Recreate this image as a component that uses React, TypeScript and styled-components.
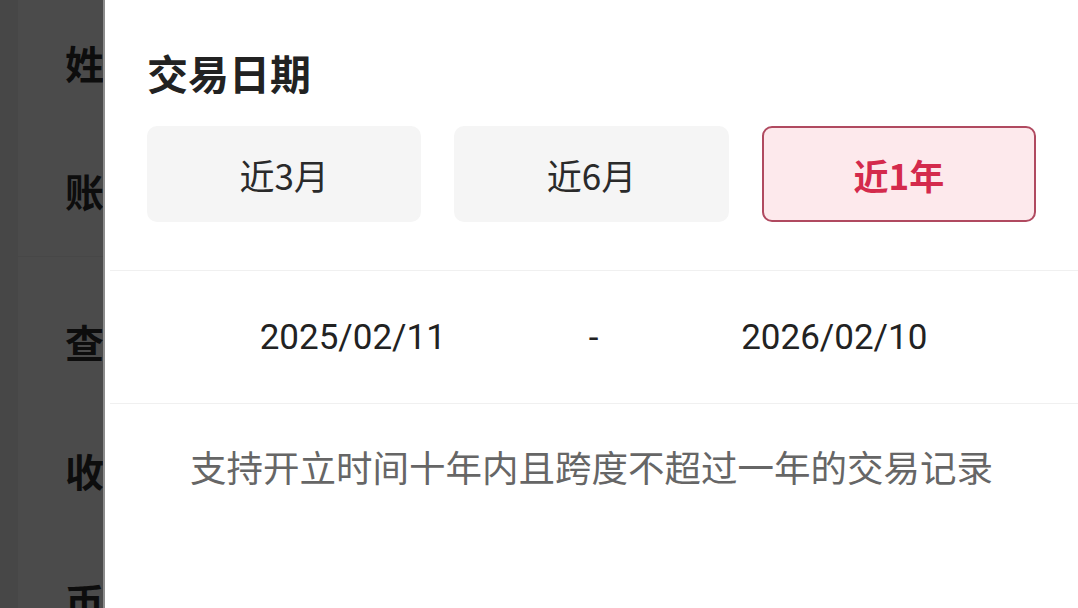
import React from "react";
import styled, { createGlobalStyle } from "styled-components";

const Global = createGlobalStyle`
  html, body { margin: 0; padding: 0; background: #ffffff; }
  body { font-family: "Noto Sans CJK SC", "Noto Sans", sans-serif; }
  #root { width: 1078px; height: 608px; overflow: hidden; }
`;

const Page = styled.div`
  display: flex;
  width: 1078px;
  height: 608px;
  overflow: hidden;
`;

const Backdrop = styled.div`
  flex: 0 0 103px;
  display: flex;
  flex-direction: column;
  overflow: hidden;
  background: linear-gradient(to right, #474747 0, #474747 18px, #4b4b4b 18px);
`;

const BackdropRow = styled.div<{ $h: number; $line?: boolean }>`
  flex: 0 0 ${(p) => p.$h}px;
  display: flex;
  align-items: center;
  padding-left: 65px;
  white-space: nowrap;
  box-sizing: border-box;
  border-top: ${(p) => (p.$line ? "1px solid #474747" : "none")};
  font-family: "Noto Sans CJK SC", sans-serif;
  font-weight: 700;
  font-size: 39px;
  color: #0d0d0d;
`;

const Edge = styled.div`
  flex: 0 0 2px;
  background: #8c8c8c;
`;

const Sheet = styled.div`
  flex: 1;
  display: flex;
  flex-direction: column;
  background: #ffffff;
`;

const Title = styled.h2`
  margin: 0;
  padding: 48px 0 0 42px;
  font-family: "Noto Sans CJK SC", sans-serif;
  font-weight: 700;
  font-size: 41px;
  line-height: 49px;
  color: #222222;
`;

const Ranges = styled.div`
  display: grid;
  grid-template-columns: repeat(3, 1fr);
  gap: 33px;
  padding: 29px 42px 0 42px;
`;

const RangeButton = styled.div<{ $active?: boolean }>`
  height: 96px;
  box-sizing: border-box;
  border-radius: 10px;
  display: flex;
  align-items: center;
  justify-content: center;
  font-family: "Noto Sans CJK SC", sans-serif;
  font-size: 35px;
  font-weight: ${(p) => (p.$active ? 700 : 400)};
  color: ${(p) => (p.$active ? "#d42a4c" : "#2a2a2a")};
  background: ${(p) => (p.$active ? "#fde9ec" : "#f5f5f5")};
  border: 2px solid ${(p) => (p.$active ? "#b04a60" : "#f5f5f5")};
`;

const Divider = styled.div<{ $top: number }>`
  margin-top: ${(p) => p.$top}px;
  margin-left: 5px;
  height: 1px;
  background: #f0f0f0;
`;

const DateRow = styled.div`
  height: 132px;
  display: grid;
  grid-template-columns: 1fr auto 1fr;
  align-items: center;
  padding: 0 8px 0 12px;
  font-family: Roboto, "Noto Sans", sans-serif;
  font-size: 35px;
  color: #222222;
`;

const DateCell = styled.div`
  text-align: center;
`;

const Dash = styled.div`
  text-align: center;
  width: 10px;
`;

const Hint = styled.p`
  margin: 0;
  padding-top: 38px;
  text-align: center;
  font-family: "Noto Sans CJK SC", sans-serif;
  font-size: 36.5px;
  line-height: 50px;
  color: #666666;
`;

const backdropRows = [
  { label: "姓", h: 124 },
  { label: "账", h: 132 },
  { label: "查", h: 168, line: true },
  { label: "收", h: 92 },
  { label: "币", h: 168 },
];

const ranges = [
  { label: "近3月" },
  { label: "近6月" },
  { label: "近1年", active: true },
];

export default function App() {
  return (
    <>
      <Global />
      <Page>
        <Backdrop>
          {backdropRows.map((r) => (
            <BackdropRow key={r.label} $h={r.h} $line={r.line}>
              {r.label}
            </BackdropRow>
          ))}
        </Backdrop>
        <Edge />
        <Sheet>
          <Title>交易日期</Title>
          <Ranges>
            {ranges.map((r) => (
              <RangeButton key={r.label} $active={r.active}>
                {r.label}
              </RangeButton>
            ))}
          </Ranges>
          <Divider $top={48} />
          <DateRow>
            <DateCell>2025/02/11</DateCell>
            <Dash>-</Dash>
            <DateCell>2026/02/10</DateCell>
          </DateRow>
          <Divider $top={0} />
          <Hint>支持开立时间十年内且跨度不超过一年的交易记录</Hint>
        </Sheet>
      </Page>
    </>
  );
}
